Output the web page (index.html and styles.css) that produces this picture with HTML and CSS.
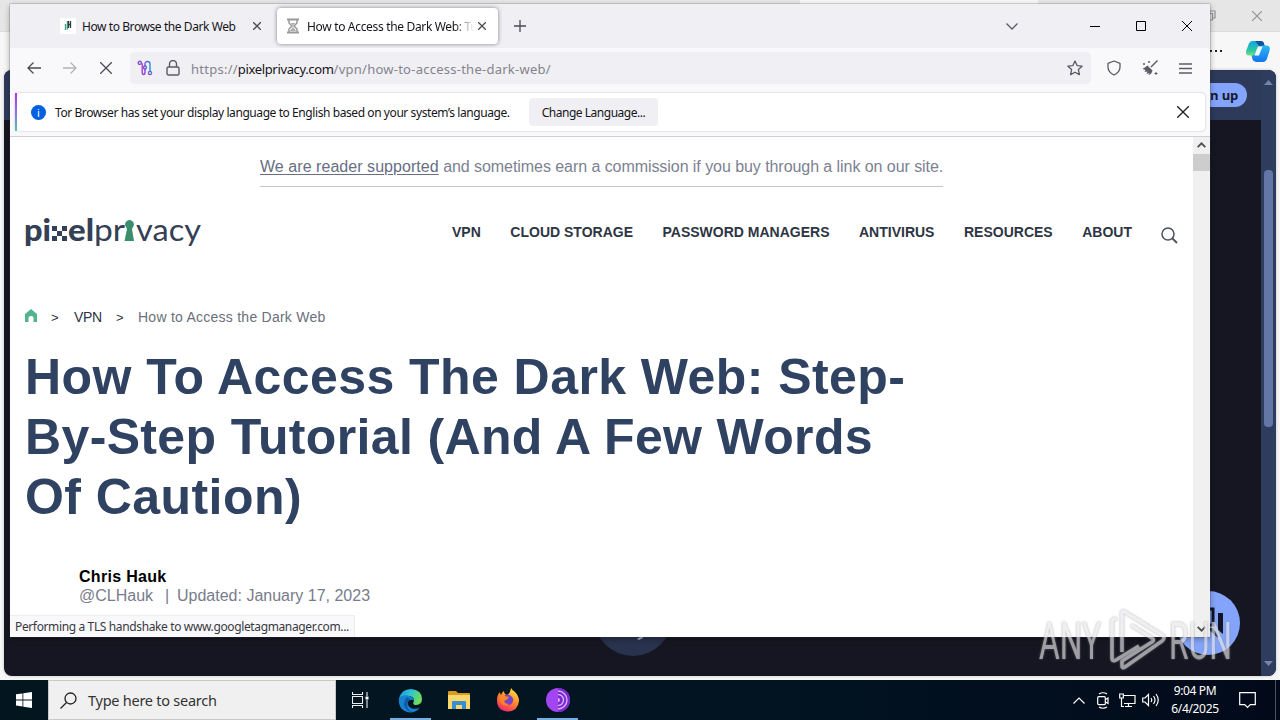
FILE: index.html
```html
<!DOCTYPE html>
<html lang="en">
<head>
<meta charset="utf-8">
<title>How to Access the Dark Web</title>
<link rel="stylesheet" href="styles.css">
</head>
<body>
<div class="desktop">
  <section class="edge">
    <div class="edge-title">
      <svg width="11" height="11" viewBox="0 0 11 11" class="thin"><path d="M1 3.500h6.500v6.500H1zM3.500 3V1H10v7H8"/></svg>
      <svg width="10" height="10" viewBox="0 0 10 10" class="thin"><path d="M0 0l10 10M10 0L0 10"/></svg>
    </div>
    <div class="edge-tab"></div>
    <div class="edge-tools">
      <span class="dots"><i></i><i></i><i></i></span>
      <svg width="24" height="22" viewBox="0 0 26 24">
        <defs>
          <linearGradient id="ca" x1="0" y1="0" x2="0" y2="1"><stop offset="0" stop-color="#10a5e8"/><stop offset=".65" stop-color="#2dc9a0"/><stop offset="1" stop-color="#7ee07b"/></linearGradient>
          <linearGradient id="cb" x1="0" y1="0" x2="0" y2="1"><stop offset="0" stop-color="#2bb8f2"/><stop offset="1" stop-color="#1474f0"/></linearGradient>
        </defs>
        <path d="M7 1h9q3 0 3.500 3l1 3h-5q-3 0-4 4l-2 6H4q-5 0-4-5L3 4q1-3 4-3z" fill="url(#ca)"/>
        <path d="M10 1h6q3 0 3.500 3l1 3h-6z" fill="#124f9e"/>
        <path d="M18 6h4q5 0 3.500 6L23 20q-1 4-5 4h-7q-3 0-4-3l-1-4q3 0 4-3l2-4q2-4 6-4z" fill="url(#cb)"/>
        <path d="M13 7h5l-4 10H9z" fill="#f2fbff"/>
      </svg>
    </div>
    <div class="edge-page">
      <header class="edge-head"><span class="signup">Sign up</span></header>
      <div class="edge-scroll">
        <svg width="9" height="5" viewBox="0 0 9 5"><path d="M0 5L4.500 0 9 5z" fill="#7386ad"/></svg>
        <span class="edge-thumb"></span>
        <svg width="9" height="5" viewBox="0 0 9 5"><path d="M0 0L4.500 5 9 0z" fill="#7386ad"/></svg>
      </div>
      <div class="bubble"><svg width="78" height="78" viewBox="0 0 78 78"><path d="M43 61l6-4v3l-4 2z" fill="#a9b2c4"/></svg></div>
      <div class="chat"><svg width="64" height="64" viewBox="0 0 64 64"><path d="M30 18h7v16h-7" fill="none" stroke="#111522" stroke-width="3"/><path d="M42 22h5v21l-5-4zM31 37h6l5 7v3z" fill="#111522"/></svg></div>
    </div>
  </section>

  <section class="tor">
    <div class="tabs">
      <div class="tab">
        <svg width="16" height="16" viewBox="0 0 16 16"><rect width="16" height="16" fill="#fff"/><path d="M5.500 6v6M7.500 3v8.500" stroke="#3fa37f" stroke-width="1.400"/><path d="M8.500 3v7M10.500 3v7M8.500 6.500h2" stroke="#333b45" stroke-width="1.300" fill="none"/></svg>
        <span class="tab-text t1">How to Browse the Dark Web</span>
        <svg class="x" width="8" height="8" viewBox="0 0 8 8"><path d="M0 0l8 8M8 0L0 8"/></svg>
      </div>
      <div class="tab active">
        <svg width="14" height="16" viewBox="0 0 14 16"><path d="M1 1.500h12M1 14.500h12" stroke="#999" stroke-width="2"/><path d="M3 2v3l3 3-3 3v3M11 2v3L8 8l3 3v3" fill="none" stroke="#999" stroke-width="1.500"/><path d="M5 5h4L7 7.500zM7 9l3 4H4z" fill="#aaa"/></svg>
        <span class="tab-text t2">How to Access the Dark Web: Tu</span>
        <svg class="x" width="8" height="8" viewBox="0 0 8 8"><path d="M0 0l8 8M8 0L0 8"/></svg>
      </div>
      <svg class="plus" width="12" height="12" viewBox="0 0 12 12"><path d="M6 0v12M0 6h12"/></svg>
      <div class="wctl">
        <svg width="12" height="7" viewBox="0 0 12 7"><path d="M.5.500L6 6 11.500.500" stroke="#5b5b66" stroke-width="1.300"/></svg>
        <svg width="10" height="10" viewBox="0 0 10 10"><path d="M0 5.500h10"/></svg>
        <svg width="10" height="10" viewBox="0 0 10 10"><path d="M.5.500h9v9h-9z"/></svg>
        <svg width="10" height="10" viewBox="0 0 10 10"><path d="M0 0l10 10M10 0L0 10"/></svg>
      </div>
    </div>

    <div class="nav">
      <svg class="back" width="14" height="12" viewBox="0 0 14 12"><path d="M14 6H1M6.500.500L1 6l5.500 5.500"/></svg>
      <svg class="fwd" width="14" height="12" viewBox="0 0 14 12"><path d="M0 6h13M7.500.500L13 6l-5.500 5.500"/></svg>
      <svg class="stop" width="12" height="12" viewBox="0 0 12 12"><path d="M0 0l12 12M12 0L0 12"/></svg>
      <div class="url">
        <svg width="16" height="16" viewBox="0 0 16 16"><defs><linearGradient id="cg" x1="0" y1="0" x2="1" y2="0"><stop offset="0" stop-color="#b23bd6"/><stop offset=".6" stop-color="#6a52d4"/><stop offset="1" stop-color="#2b8fd6"/></linearGradient></defs><g fill="none" stroke="url(#cg)" stroke-width="1.400"><circle cx="2.800" cy="2.800" r="1.600"/><circle cx="8" cy="7.500" r="1.500"/><circle cx="13" cy="13" r="1.600"/><path d="M4.400 2.800q1 .500.800 2.200v7q0 2.500 1.400 2.500T8 12V9M8 6V4q0-2.500 2.500-2.500T13 4v7.500"/></g></svg>
        <svg width="14" height="16" viewBox="0 0 14 16"><rect x="1" y="7" width="12" height="8" rx="1.500" fill="none" stroke="#5b5b66" stroke-width="1.400"/><path d="M3.500 7V4a3.500 3.500 0 0 1 7 0v3" fill="none" stroke="#5b5b66" stroke-width="1.400"/></svg>
        <span class="addr">https://<b>pixelprivacy.com</b>/vpn/how-to-access-the-dark-web/</span>
        <svg width="16" height="16" viewBox="0 0 16 16"><path d="M8 1l2.100 4.600 5 .6-3.700 3.400 1 5L8 12.200 3.600 14.600l1-5L.900 6.200l5-.6z" fill="none" stroke="#5b5b66" stroke-width="1.300" stroke-linejoin="round"/></svg>
      </div>
      <div class="actions">
        <svg width="14" height="16" viewBox="0 0 14 16"><path d="M7 1l6 2.300V7q0 5-6 8-6-3-6-8V3.300z" fill="none" stroke="#5b5b66" stroke-width="1.300" stroke-linejoin="round"/></svg>
        <svg width="16" height="16" viewBox="0 0 16 16"><path d="M15.500.500L9 7" stroke="#5b5b66" stroke-width="1.400"/><path d="M5.500 5.500l5 5q-1 4-4 4.500l1-2-3 1 1-2.500-3 .500 1-2-3-1q2-1.500 5-3.500z" fill="#5b5b66"/><path d="M2 3v2M1 4h2M7 1v2M6 2h2M14 12v3M12.500 13.500h3" stroke="#5b5b66"/></svg>
        <svg width="13" height="11" viewBox="0 0 13 11"><path d="M0 1h13M0 5.500h13M0 10h13" stroke="#5b5b66" stroke-width="1.300"/></svg>
      </div>
    </div>

    <div class="notice-wrap"><div class="notice">
      <span class="info">i</span>
      <span class="notice-text">Tor Browser has set your display language to English based on your system’s language.</span>
      <button class="change">Change Language...</button>
      <svg class="nx" width="12" height="12" viewBox="0 0 12 12"><path d="M0 0l12 12M12 0L0 12"/></svg>
    </div></div>

    <div class="view">
      <main class="site">
        <p class="support"><u>We are reader supported</u> and sometimes earn a commission if you buy through a link on our site.</p>
        <div class="site-head">
          <svg class="logo" width="180" height="36" viewBox="0 0 180 36">
            <g fill="#344055">
              <text class="lb" x="-1" y="26" textLength="27" lengthAdjust="spacingAndGlyphs">pi</text>
              <path d="M27 11h5v5h-5zM37 11h5v5h-5zM32 16h5v5h-5zM27 21h5v5h-5zM37 21h5v5h-5z"/>
              <text class="lb" x="43" y="26" textLength="26" lengthAdjust="spacingAndGlyphs">el</text>
              <text class="lr" x="69" y="26" textLength="31" lengthAdjust="spacingAndGlyphs">pr</text>
              <text class="lr" x="111" y="26" textLength="65" lengthAdjust="spacingAndGlyphs">vacy</text>
            </g>
            <path d="M101 12a4.300 4.300 0 1 1 7 0l-1 2 2 12h-9.500l2.500-12z" fill="#3b8e6c"/>
          </svg>
          <nav class="menu"><a>VPN</a><a>CLOUD STORAGE</a><a>PASSWORD MANAGERS</a><a>ANTIVIRUS</a><a>RESOURCES</a><a>ABOUT</a></nav>
          <svg class="search" width="17" height="17" viewBox="0 0 17 17"><circle cx="7" cy="7" r="6" fill="none" stroke="#4a505c" stroke-width="1.500"/><path d="M11.500 11.500l4.500 4.500" stroke="#4a505c" stroke-width="1.800"/></svg>
        </div>
        <div class="crumbs">
          <svg width="12" height="13" viewBox="0 0 12 13"><path d="M6 0l6 5v8H8.500V8.500q0-1.500-2.500-1.500T3.500 8.500V13H0V5z" fill="#52b48d"/></svg>
          <span class="gt">&gt;</span><span class="c1">VPN</span><span class="gt">&gt;</span><span class="c2">How to Access the Dark Web</span>
        </div>
        <h1>How To Access The Dark Web: Step-<br><span class="l2">By-Step Tutorial (And A Few Words</span><br>Of Caution)</h1>
        <div class="author"><strong>Chris Hauk</strong><div class="meta"><span class="handle">@CLHauk</span><span class="bar">|</span><span class="updated">Updated: January 17, 2023</span></div></div>
      </main>
      <div class="scroll">
        <svg width="9" height="6" viewBox="0 0 9 6"><path d="M.7 5.200L4.500 1.400l3.800 3.800"/></svg>
        <span class="thumb"></span>
        <svg class="down" width="9" height="6" viewBox="0 0 9 6"><path d="M.7.800l3.800 3.800L8.300.800"/></svg>
      </div>
      <div class="status">Performing a TLS handshake to www.googletagmanager.com...</div>
    </div>
  </section>

  <svg class="watermark" width="194" height="64" viewBox="0 0 194 64">
    <text x="0" y="51" textLength="62" lengthAdjust="spacingAndGlyphs">ANY</text>
    <text x="130" y="51" textLength="63" lengthAdjust="spacingAndGlyphs">RUN</text>
    <path d="M83 44V5q0-3 3-1l37 23q4 3 0 6L86 59q-3 2-3-1v-5l30-19q3-2 0-4L92 17M78 11h-2q-3 0-3 3v36q0 4 4 2l23-14"/>
  </svg>

  <footer class="taskbar">
    <div class="start"><svg width="16" height="16" viewBox="0 0 16 16" fill="#fff"><path d="M0 2.300l6.500-.9v6.100H0zM7.300 1.200L16 0v7.500H7.300zM0 8.400h6.500v6.100L0 13.600zM7.300 8.400H16V16l-8.700-1.200z"/></svg></div>
    <div class="find"><svg width="17" height="17" viewBox="0 0 17 17" fill="none" stroke="#222" stroke-width="1.300"><circle cx="10.500" cy="6.500" r="5.500"/><path d="M6.500 10.500L.500 16.500"/></svg><span>Type here to search</span></div>
    <div class="apps">
      <div class="app"><svg width="17" height="16" viewBox="0 0 17 16" fill="none" stroke="#e8eef0" stroke-width="1.100"><path d="M.5 0v2.500h10V0M.5 4.500h10v7H.500zM.5 16v-2.500h10V16M15 0v4M15 8v8"/><path d="M13.500 4.500h3v3h-3z" fill="#fff" stroke="none"/></svg></div>
      <div class="app on"><svg width="25" height="25" viewBox="0 0 25 25"><defs><linearGradient id="eg" x1="0" y1="0" x2="1" y2=".4"><stop offset="0" stop-color="#1c93dc"/><stop offset=".5" stop-color="#2bc4d4"/><stop offset="1" stop-color="#6fdc5c"/></linearGradient></defs><path d="M1 11Q3 1 13 1q11 1 11 10 0 6-7 6-3-1-1-4 0-5-6-5-6 0-9 3z" fill="url(#eg)"/><path d="M.8 10Q4 6.500 10 7.500q5 1 6 5-4-2-6 1-1 5 4 7 5 1 8-1-4 5-10 5Q0 23 .8 10z" fill="#1782d2"/><path d="M9 9q-6 7 0 13 2 2 5 2-7-3-4-10l2-3z" fill="#1259a5"/></svg></div>
      <div class="app"><svg width="22" height="19" viewBox="0 0 22 19"><path d="M0 1q0-1 1-1h7l2 2h11q1 0 1 1v3H0z" fill="#dc9a1e"/><path d="M0 4h22v14H0z" fill="#fbd86c"/><path d="M4 18v-7q0-1 1-1h12q1 0 1 1v7h-4v-4H8v4z" fill="#378fd0"/></svg></div>
      <div class="app"><svg width="24" height="24" viewBox="0 0 24 24"><defs><linearGradient id="fg" x1=".8" y1="0" x2=".3" y2="1"><stop offset="0" stop-color="#ffe94a"/><stop offset=".5" stop-color="#ff8a25"/><stop offset="1" stop-color="#f5266f"/></linearGradient></defs><path d="M15 0q1 2 4 4 4 4 4 9-1 10-11 10.500Q1 23 1 12q0-5 3-8 0 2 1 3Q6 4 8 3q0 3 3 4 3-1 4-7z" fill="url(#fg)"/><path d="M8 8q3-3 7 0 3 2 2 5-1 4-5 4-5 0-5-5l3-1q2 0 3-2z" fill="#7543cc"/><path d="M5 8q4-1 7 3l-4 2q1 3 5 3-4 3-7 0-3-3-1-8z" fill="#ff8424"/></svg></div>
      <div class="app on"><svg width="24" height="24" viewBox="0 0 24 24"><circle cx="12" cy="12" r="12" fill="#a445f3"/><path d="M12 0a12 12 0 0 1 0 24z" fill="#7a2bd0"/><path d="M12 3a9 9 0 0 1 0 18M12 6.500a5.500 5.500 0 0 1 0 11" fill="none" stroke="#dcaeff" stroke-width="1.400"/><path d="M12 10a2 2 0 0 1 0 4z" fill="#dcaeff"/></svg></div>
    </div>
    <div class="tray">
      <span class="ti"><svg width="12" height="7" viewBox="0 0 12 7"><path d="M.5 6.500L6 1l5.500 5.500"/></svg></span>
      <span class="ti"><svg width="12" height="17" viewBox="0 0 12 17"><rect x=".7" y="4.700" width="7.600" height="8" rx="1"/><path d="M8.500 7.500l2.500-1.500v5.500l-2.500-1.500M2 2q4-2.500 8 0M2 15q4 2.500 8 0"/></svg></span>
      <span class="ti"><svg width="17" height="15" viewBox="0 0 17 15"><path d="M5 2.500h11v8H5M9.500 10.500v3M6 13.500h7M.7 1h3.600v4H.700zM2.500 5v8.500H5"/></svg></span>
      <span class="ti"><svg width="18" height="14" viewBox="0 0 18 14"><path d="M.7 5h2.300L6.500 1.500v11L3 9H.700zM9 5q1.500 2 0 4M11.500 3q3 4 0 8M14 1q4.500 6 0 12"/></svg></span>
      <div class="clock"><span>9:04 PM</span><span>6/4/2025</span></div>
      <span class="note"><svg width="17" height="17" viewBox="0 0 17 17"><path d="M.7.700h15.600v12h-5L8.500 15.500 5.700 12.700h-5z"/></svg></span>
      <span class="peek"></span>
    </div>
  </footer>
</div>
</body>
</html>
```

FILE: styles.css
```css
* { box-sizing: border-box; }
body { margin: 0; font-family: "Noto Sans", "Open Sans", sans-serif; }
svg { display: block; flex: none; }
.desktop { position: relative; width: 1280px; height: 720px; overflow: hidden; background: #f7f7f7; }

.edge { position: absolute; inset: 0 0 40px 0; background: #f7f7f8; }
.edge-title { height: 32px; background: #e6e6e6; border-bottom: 1px solid #dcdcdc; display: flex; justify-content: flex-end; align-items: center; gap: 36px; padding-right: 18px; }
.thin { fill: none; stroke: #939393; stroke-width: 1.2; }
.edge-tab { position: absolute; left: 800px; top: 0; width: 238px; height: 4px; background: #f8f8f8; }
.edge-tools { height: 38px; display: flex; justify-content: flex-end; align-items: center; gap: 24px; padding-right: 10px; }
.dots { display: flex; gap: 3px; }
.dots i { width: 2px; height: 2px; background: #222; }
.edge-page { position: relative; height: 606px; margin: 0 4px; border-radius: 8px; overflow: hidden; background: #161622; box-shadow: 0 0 3px #9999; }
.edge-head { height: 50px; background: #2d3a5a; display: flex; justify-content: flex-end; align-items: center; padding-right: 29px; }
.signup { width: 84px; height: 24px; border-radius: 12px; background: #84a4fb; color: #14172c; font: 700 13px/24px "Open Sans", sans-serif; text-align: right; padding-right: 9px; letter-spacing: -.2px; }
.edge-scroll { position: absolute; top: 0; right: 0; width: 15px; height: 606px; background: #2e3d5e; display: flex; flex-direction: column; align-items: center; padding: 10px 0; }
.edge-thumb { width: 9px; height: 257px; margin: 85px 0 auto; border-radius: 4px; background: #6376a5; }
.bubble { position: absolute; left: 590px; top: 508px; width: 78px; height: 78px; border-radius: 50%; background: #29334d; }
.chat { position: absolute; left: 1172px; top: 521px; width: 64px; height: 64px; border-radius: 50%; background: #84a4fb; }

.tor { position: absolute; left: 10px; top: 4px; width: 1200px; height: 633px; background: #fff; box-shadow: 0 0 1px #444, 0 2px 6px #0005; display: flex; flex-direction: column; }
.tabs { height: 44px; flex: none; background: #f0eff4; display: flex; align-items: center; padding-left: 42px; }
.tab { display: flex; align-items: center; width: 222px; height: 36px; padding: 0 13px 0 8px; border-radius: 4px; font-size: 12px; color: #15141a; }
.tab svg:first-child { margin-right: 6px; }
.tab.active { width: 221px; margin-left: 3px; padding: 0 12px 0 9px; background: #fff; box-shadow: 0 0 4px #0007; }
.tab.active svg:first-child { margin-right: 7px; }
.tab-text { flex: 1; min-width: 0; white-space: nowrap; line-height: 20px; padding-top: 2px; }
.t1 { letter-spacing: -.42px; }
.t2 { letter-spacing: -.33px; -webkit-mask-image: linear-gradient(90deg, #000 88%, transparent); mask-image: linear-gradient(90deg, #000 88%, transparent); }
.x, .plus, .back, .fwd, .stop, .nx { fill: none; stroke: #4b4b55; stroke-width: 1.3; }
.nx { stroke: #1b1b20; }
.tab .x { margin-left: 4px; }
.plus { margin-left: 16px; }
.wctl { margin-left: auto; display: flex; align-items: center; gap: 36px; padding-right: 18px; }
.wctl svg { fill: none; stroke: #000; }
.wctl svg:first-child { margin-right: 36px; }
.nav { height: 43px; flex: none; background: #f9f9fb; display: flex; align-items: center; padding: 0 18px 3px 17px; }
.fwd { margin-left: 22px; opacity: .4; }
.stop { margin-left: 23px; }
.url { width: 961px; height: 32px; margin-left: 18px; background: #f0f0f4; border-radius: 4px; display: flex; align-items: center; padding: 0 8px 0 7px; }
.url svg:nth-child(2) { margin: 0 11px 0 13px; }
.addr { flex: 1; padding-top: 1px; font-size: 13px; color: #84838c; white-space: nowrap; letter-spacing: .25px; }
.addr b { font-weight: 400; color: #15141a; letter-spacing: -.35px; }
.actions { flex: 1; display: flex; align-items: center; justify-content: space-between; padding-left: 16px; }
.notice-wrap { height: 46px; flex: none; background: #f9f9fb; border-bottom: 1px solid #cfcfd4; padding: 2px 5px 4px; }
.notice { height: 38px; background: #fff; border-radius: 4px; box-shadow: 0 0 2px #0004; display: flex; align-items: center; padding: 0 16px 0 16px; position: relative; font-size: 12px; color: #15141a; }
.notice::before { content: ""; position: absolute; left: 0; top: 0; width: 2px; height: 38px; background: linear-gradient(#b833e1, #8d6fe8 50%, #4cc7b5); }
.info { width: 15px; height: 15px; border-radius: 50%; background: #0061e0; color: #fff; text-align: center; font: 11px/15px "Noto Sans", sans-serif; margin-right: 9px; }
.notice-text { width: 474px; white-space: nowrap; letter-spacing: -.42px; }
.change { width: 129px; height: 28px; border: 0; border-radius: 4px; padding: 0; background: #f0f0f4; font: 12px "Noto Sans", sans-serif; letter-spacing: -.48px; color: #15141a; }
.nx { margin-left: auto; }

.view { flex: 1; position: relative; display: flex; min-height: 0; }
.site { flex: 1; padding: 0 15px; font-family: "Liberation Sans", Arial, sans-serif; overflow: hidden; }
.support { width: 683px; height: 50px; margin: 0 0 0 235px; border-bottom: 1px solid #c5c6cb; font-size: 16px; line-height: 60px; color: #7c8192; white-space: nowrap; letter-spacing: -.06px; }
.support u { color: #686e83; text-underline-offset: 2px; letter-spacing: .05px; }
.site-head { height: 90px; display: flex; align-items: center; }
.logo { margin-top: 2px; overflow: visible; }
.lb { font: 900 30px Lato, sans-serif; }
.lr { font: 400 30px Lato, sans-serif; }
.menu { display: flex; justify-content: space-between; width: 681px; margin-left: 247px; font-size: 14px; font-weight: 700; color: #2e3543; white-space: nowrap; }
.search { margin: 6px 0 0 29px; }
.crumbs { display: flex; align-items: center; height: 20px; margin-top: 30px; font-size: 14px; color: #2e3543; letter-spacing: .25px; }
.crumbs svg { margin-top: -3px; }
.crumbs .gt { width: 36px; padding-left: 14px; font-size: 13px; }
.c1 { width: 28px; margin-left: 1px; letter-spacing: -.3px; }
.c2 { color: #6a6f7c; white-space: nowrap; }
h1 { margin: 20px 0 0; font-size: 50px; line-height: 60px; color: #2f4262; letter-spacing: .44px; white-space: nowrap; }
.l2 { letter-spacing: .36px; }
.author { padding: 40px 0 0 54px; font-size: 16px; line-height: 19px; color: #777c8c; }
.author strong { color: #000; letter-spacing: .3px; }
.meta { display: flex; }
.handle { width: 86px; }
.bar { width: 12px; }
.updated { white-space: nowrap; }
.scroll { width: 17px; background: #f0f0f0; display: flex; flex-direction: column; align-items: center; padding: 5px 0; }
.scroll svg { fill: none; stroke: #505050; stroke-width: 1.9; }
.thumb { width: 17px; height: 17px; margin-top: 6px; background: #cdcdcd; }
.scroll .down { margin-top: auto; }
.status { position: absolute; left: 0; bottom: 0; width: 345px; height: 22px; padding-left: 5px; background: #f9f9fb; border: 1px solid #eee; border-width: 1px 1px 0 0; font-size: 12px; line-height: 22px; color: #38383d; white-space: nowrap; letter-spacing: -.37px; }

.watermark { position: absolute; left: 1039px; top: 608px; overflow: visible; opacity: .65; filter: drop-shadow(0 0 1px #888); }
.watermark text { font: 400 52px Roboto, sans-serif; fill: #e8e8ea; }
.watermark path { fill: none; stroke: #e8e8ea; stroke-width: 3.6; stroke-linejoin: round; }

.taskbar { position: absolute; left: 0; right: 0; bottom: 0; height: 40px; display: flex; background: linear-gradient(90deg, #03161f, #021421 60%, #020a1a); }
.start { width: 48px; display: grid; place-items: center; }
.find { width: 288px; background: #f0f0f0; border: 1px solid #c9c9c9; display: flex; align-items: center; padding-left: 11px; gap: 11px; color: #333; font-size: 14.500px; letter-spacing: -.25px; }
.apps { display: flex; }
.app { width: 49px; height: 40px; display: grid; place-items: center; }
.app.on { width: 41px; margin: 0 3px 0 5px; box-shadow: inset 0 -2px #76b0e2; }
.tray { margin-left: auto; display: flex; align-items: center; color: #fff; }
.tray svg { fill: none; stroke: #fff; stroke-width: 1.2; }
.ti { width: 24px; display: grid; place-items: center; }
.clock { width: 64px; display: flex; flex-direction: column; align-items: center; font-size: 12px; line-height: 18px; letter-spacing: -.35px; }
.note { width: 40px; margin-right: 8px; display: grid; place-items: center; }
.peek { width: 5px; height: 40px; border-left: 1px solid #465360; }
```
